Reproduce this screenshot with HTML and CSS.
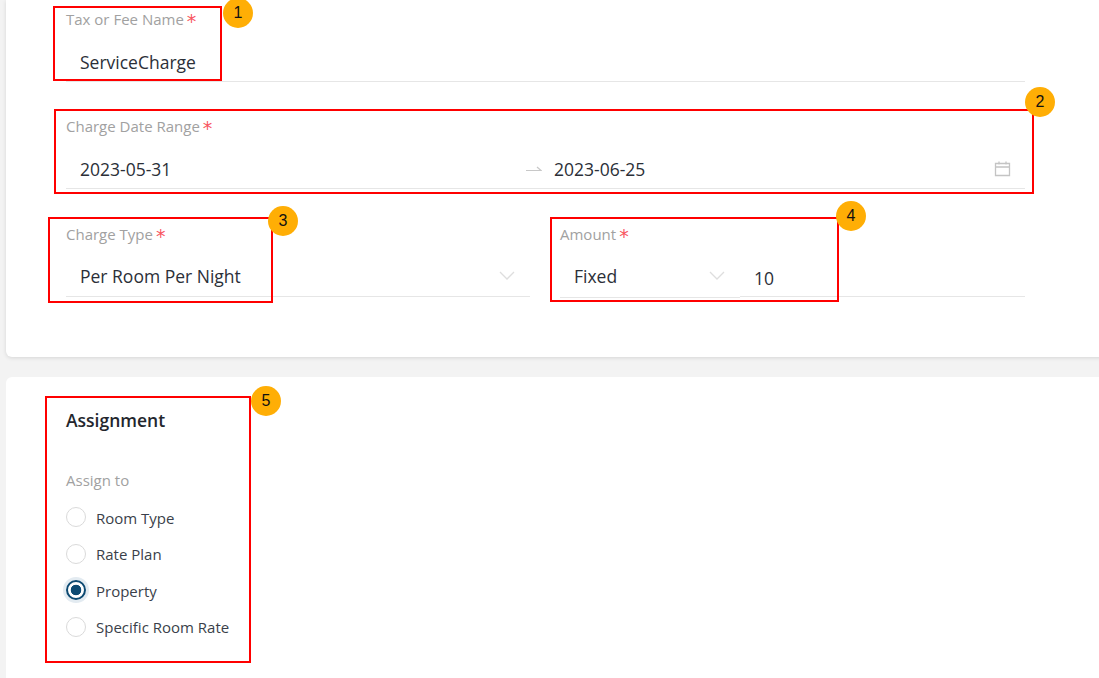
FILE: index.html
```html
<!DOCTYPE html>
<html lang="en">
<head>
<meta charset="utf-8">
<title>Tax or Fee</title>
<link rel="stylesheet" href="styles.css">
</head>
<body>
<div class="page">
  <section class="card card-form">
    <div class="field">
      <label class="label">Tax or Fee Name<span class="req">*</span></label>
      <div class="control"><span class="value">ServiceCharge</span></div>
    </div>
    <div class="field field-date">
      <label class="label">Charge Date Range<span class="req">*</span></label>
      <div class="control date">
        <span class="value date-from">2023-05-31</span>
        <svg class="swap" width="16" height="8" viewBox="0 0 16 8"><path d="M0 5.5h15L11 2" fill="none" stroke="#c8c8c8" stroke-width="1.2"/></svg>
        <span class="value date-to">2023-06-25</span>
        <svg class="cal" width="17" height="17" viewBox="0 0 17 17"><path d="M1.5 3.5h14v12h-14zM1.5 7h14M5 1.5v3M12 1.5v3" fill="none" stroke="#c4c4c4" stroke-width="1.3"/></svg>
      </div>
    </div>
    <div class="row">
      <div class="field">
        <label class="label">Charge Type<span class="req">*</span></label>
        <div class="control select">
          <span class="value">Per Room Per Night</span>
          <svg class="chev" width="16" height="9" viewBox="0 0 16 9"><path d="M1 1l7 7 7-7" fill="none" stroke="#dedede" stroke-width="1.3"/></svg>
        </div>
      </div>
      <div class="field">
        <label class="label">Amount<span class="req">*</span></label>
        <div class="amount">
          <div class="control select amount-type">
            <span class="value">Fixed</span>
            <svg class="chev" width="16" height="9" viewBox="0 0 16 9"><path d="M1 1l7 7 7-7" fill="none" stroke="#dedede" stroke-width="1.3"/></svg>
          </div>
          <div class="control amount-value"><span class="value">10</span></div>
        </div>
      </div>
    </div>
  </section>
  <section class="card card-assign">
    <h2 class="title">Assignment</h2>
    <div class="assign-label">Assign to</div>
    <div class="radios">
      <div class="radio"><span class="dot"></span><span class="radio-text">Room Type</span></div>
      <div class="radio"><span class="dot"></span><span class="radio-text">Rate Plan</span></div>
      <div class="radio on"><span class="dot"></span><span class="radio-text">Property</span></div>
      <div class="radio"><span class="dot"></span><span class="radio-text">Specific Room Rate</span></div>
    </div>
  </section>

  <div class="mark m1"></div><div class="mark m2"></div><div class="mark m3"></div><div class="mark m4"></div><div class="mark m5"></div>
  <div class="badge b1">1</div><div class="badge b2">2</div><div class="badge b3">3</div><div class="badge b4">4</div><div class="badge b5">5</div>
</div>
</body>
</html>
```
FILE: styles.css
```css
* { box-sizing: border-box; }
html, body { margin: 0; height: 100%; }
body { background: #f3f3f3; font-family: "Open Sans", "Liberation Sans", sans-serif; overflow: hidden; }
.page { position: relative; width: 1099px; height: 678px; overflow: hidden; padding-left: 6px; display: flex; flex-direction: column; gap: 20px; }

.card { background: #fff; width: 1110px; flex: none; }
.card-form { height: 357px; border-radius: 0 0 6px 6px; box-shadow: 0 1px 4px rgba(0,0,0,.12); padding: 9px 0 0 60px; }
.card-assign { height: 320px; border-radius: 6px 6px 0 0; padding: 31px 0 0 60px; }

.field { width: 959px; height: 107px; }
.field-date { height: 108px; }
.label { display: block; height: 20px; font-size: 15px; line-height: 20px; color: #a1a1a1; }
.req { color: #f8565f; font-family: "DejaVu Sans", sans-serif; font-size: 19px; line-height: 25px; margin-left: 3px; vertical-align: top; }
.control { display: flex; align-items: center; height: 34px; margin-top: 19px; padding: 0 0 6px 14px; border-bottom: 1px solid #e6e6e6; }
.value { font-size: 17.5px; line-height: 24px; color: #2b2f38; }

.date-from { width: 446px; }
.swap { margin-right: 12px; flex: none; }
.date-to { flex: 1; }
.cal { margin-right: 14px; flex: none; }

.row { display: flex; gap: 30px; width: 959px; }
.row .field { width: 464px; flex: none; }
.row .field:last-child { width: 465px; }
.row .control { padding-bottom: 8px; }
.select { justify-content: space-between; }
.select .chev { margin-right: 15px; }
.amount { display: flex; }
.row .amount-type { width: 180px; flex: none; margin-top: 20px; padding-bottom: 10px; }
.row .amount-value { flex: 1; padding-bottom: 4px; }

.title { margin: 0; font-size: 17.5px; line-height: 24px; font-weight: 600; color: #23262d; }
.assign-label { margin-top: 38px; font-size: 15px; line-height: 20px; color: #a1a1a1; }
.radios { margin-top: 9px; display: flex; flex-direction: column; }
.radio { display: flex; align-items: center; height: 36.5px; font-size: 15px; color: #3a3f4a; }
.radio-text { position: relative; top: .6px; }
.dot { width: 20px; height: 20px; margin-right: 10px; border-radius: 50%; border: 1px solid #dadada; background: #fff; flex: none; }
.on .dot { border: 2px solid #0d4a72; box-shadow: 0 0 0 3px #e3ebf1; background: radial-gradient(circle, #0d4a72 0 5px, #fff 5.6px); }

.mark { position: absolute; border: 2px solid #f00; }
.m1 { left: 53px; top: 6px; width: 169px; height: 75px; }
.m2 { left: 54px; top: 109px; width: 980px; height: 85px; }
.m3 { left: 48px; top: 217px; width: 225px; height: 86px; }
.m4 { left: 550px; top: 217px; width: 289px; height: 85px; }
.m5 { left: 45px; top: 396px; width: 206px; height: 267px; }

.badge { position: absolute; width: 30px; height: 30px; border-radius: 50%; background: #ffae05; color: #111; font-family: "Liberation Sans", Arial, sans-serif; font-size: 16px; line-height: 29px; text-align: center; }
.b1 { left: 223px; top: -2px; }
.b2 { left: 1025px; top: 87px; }
.b3 { left: 268px; top: 206px; }
.b4 { left: 836px; top: 201px; }
.b5 { left: 251px; top: 386px; }
```
